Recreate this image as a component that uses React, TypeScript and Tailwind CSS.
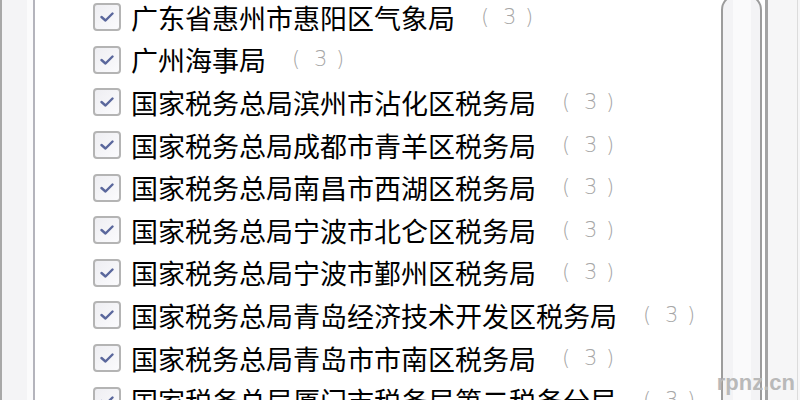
import React from "react";

const rows = [
  "广东省惠州市惠阳区气象局",
  "广州海事局",
  "国家税务总局滨州市沾化区税务局",
  "国家税务总局成都市青羊区税务局",
  "国家税务总局南昌市西湖区税务局",
  "国家税务总局宁波市北仑区税务局",
  "国家税务总局宁波市鄞州区税务局",
  "国家税务总局青岛经济技术开发区税务局",
  "国家税务总局青岛市市南区税务局",
  "国家税务总局厦门市税务局第二税务分局",
];

function Check() {
  return (
    <div className="w-[28px] h-[28px] shrink-0 rounded-[4px] border-2 border-[#b4b4b4] bg-gradient-to-br from-[#eeeef2] to-[#fbfbfd] flex items-center justify-center">
      <svg width="14" height="10" viewBox="0 0 14 10">
        <path d="M1.5 5 L5.5 8.5 L12.5 1.5" fill="none" stroke="#5a679c" strokeWidth="2.4" strokeLinecap="round" strokeLinejoin="round" />
      </svg>
    </div>
  );
}

export default function App() {
  return (
    <div
      className="relative w-[800px] h-[400px] overflow-hidden bg-white flex"
      style={{ fontFamily: '"Noto Sans CJK SC", "Noto Sans", sans-serif' }}
    >
      <div className="w-[35px] shrink-0 h-full border-l-2 border-r-2 border-l-[#a8a8a8] border-r-[#b4b4bc] bg-[#f4f4f6] flex justify-end">
        <div className="w-[6px] h-full bg-[#fbfbfc]" />
      </div>
      <div className="flex-1 h-full bg-white">
        <div className="-mt-[4px] pl-[58px] flex flex-col">
          {rows.map((r) => (
            <div key={r} className="h-[42.6px] flex items-center">
              <Check />
              <span className="ml-[10px] text-[27px] leading-none text-black whitespace-nowrap tracking-[0px]">{r}</span>
              <span className="ml-[26px] inline-flex text-[21px] leading-none font-light text-[#a6a6a6]" style={{ fontFamily: '"DejaVu Sans", sans-serif' }}>
                <span className="w-[22px]">(</span>
                <span className="w-[22px]">3</span>
                <span className="w-[10px]">)</span>
              </span>
            </div>
          ))}
        </div>
      </div>
      <div className="w-[45px] shrink-0 h-full flex justify-start pl-[1px]">
        <div className="w-[41px] -mt-[6px] h-[420px] rounded-t-[16px] border-2 border-[#9c9c9c] bg-[#f3f3f5] flex justify-center">
          <div className="w-[18px] h-full bg-[#fafafb]" />
        </div>
      </div>
      <div className="w-[35px] shrink-0 h-full border-l-[3px] border-[#a4a4a4] bg-[#f6f6f7] flex justify-end">
        <div className="w-[1px] h-full bg-[#dcdcdc] mr-[2px]" />
      </div>
      <div
        className="absolute right-[5px] bottom-[6px] text-[22px] font-bold text-[#b9b9b9] leading-none"
        style={{ fontFamily: '"Liberation Sans", Arial, sans-serif' }}
      >
        rpnz.cn
      </div>
    </div>
  );
}
